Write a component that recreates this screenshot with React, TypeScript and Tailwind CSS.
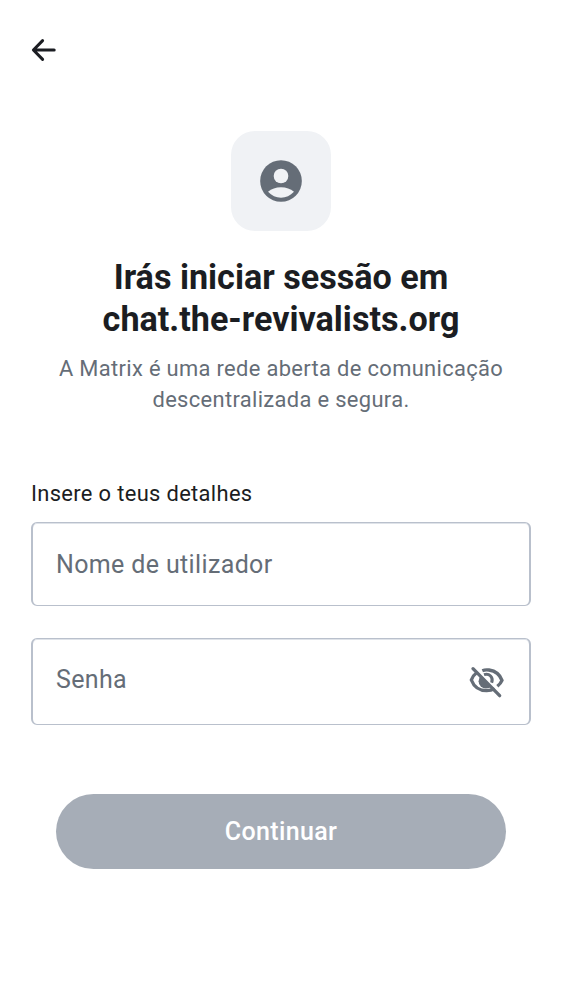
import React from "react";

function ArrowBack() {
  return (
    <svg className="h-7 w-7" viewBox="0 0 28 28" fill="none" stroke="currentColor" strokeWidth="3" strokeLinecap="round" strokeLinejoin="round">
      <path d="M25.2 14H5M13.6 4.6L4.4 14l9.2 9.4" />
    </svg>
  );
}

function UserProfile() {
  return (
    <svg className="size-[50px]" viewBox="0 0 150 150">
      <circle cx="75" cy="75" r="62.5" fill="currentColor" />
      <circle cx="75" cy="60" r="22" fill="#f0f2f5" />
      <path d="M36 107c11-8 23-13 39-13s28 5 39 13c-11 11-24 18-39 18s-28-7-39-18z" fill="#f0f2f5" />
    </svg>
  );
}

function VisibilityOff() {
  return (
    <svg className="mr-px h-9 w-9" viewBox="0 0 108 108" fill="none" stroke="currentColor" strokeWidth="10">
      <path d="M40 20C47 17 54 17 60 18c19 3 33 14 39 31-3 7-8 13-14 18" />
      <path d="M22 27C15 32 10 39 7 48c8 21 25 32 46 32 9 0 17-2 24-6" />
      <path d="M35 36a21.5 21.5 0 0 0 32 31z" fill="currentColor" stroke="none" />
      <path d="M45 32c16-5 29 8 23 24" strokeWidth="9" />
      <path d="M12 14L92 95" strokeLinecap="round" />
    </svg>
  );
}

export default function App() {
  return (
    <main className="flex h-[1000px] w-[562px] flex-col bg-white px-[31px] font-['Roboto',sans-serif] text-[#1b1d22]">
      <header className="flex h-[100px] items-center">
        <button type="button" aria-label="Voltar" className="-ml-[2px]">
          <ArrowBack />
        </button>
      </header>
      <section className="flex flex-col items-center pt-[31px] text-center">
        <div className="flex size-[100px] items-center justify-center rounded-[24px] bg-[#f0f2f5] text-[#656d77]">
          <UserProfile />
        </div>
        <h1 className="mt-[25px] text-[34.15px] leading-[42px] font-bold whitespace-nowrap">
          Irás iniciar sessão em
          <br />
          chat.the-revivalists.org
        </h1>
        <p className="mt-[13px] text-[21.9px] leading-[31px] tracking-[0.34px] whitespace-nowrap text-[#656d77]">
          A Matrix é uma rede aberta de comunicação
          <br />
          descentralizada e segura.
        </p>
      </section>
      <form className="mt-[63px] flex flex-col">
        <p className="text-[21.9px] leading-[31px] tracking-[0.34px]">Insere o teus detalhes</p>
        <div className="mt-[13px] flex h-[84px] items-center rounded-md border-x-2 border-y border-[#b9c0cc] px-[23px] pt-px text-[25px] tracking-[0.36px] text-[#656d77] shadow-[inset_0_1px_0_#dfe3e9]">
          Nome de utilizador
        </div>
        <div className="mt-8 flex h-[87px] items-center justify-between rounded-md border-x-2 border-y border-[#b9c0cc] px-[23px] text-[25px] tracking-[0.36px] text-[#656d77] shadow-[inset_0_1px_0_#dfe3e9]">
          <span className="-mt-[3px]">Senha</span>
          <VisibilityOff />
        </div>
        <button type="button" className="mx-[25px] mt-[69px] h-[75px] rounded-full bg-[#a6adb7] text-[25px] font-medium tracking-[0.36px] text-white">
          Continuar
        </button>
      </form>
    </main>
  );
}
